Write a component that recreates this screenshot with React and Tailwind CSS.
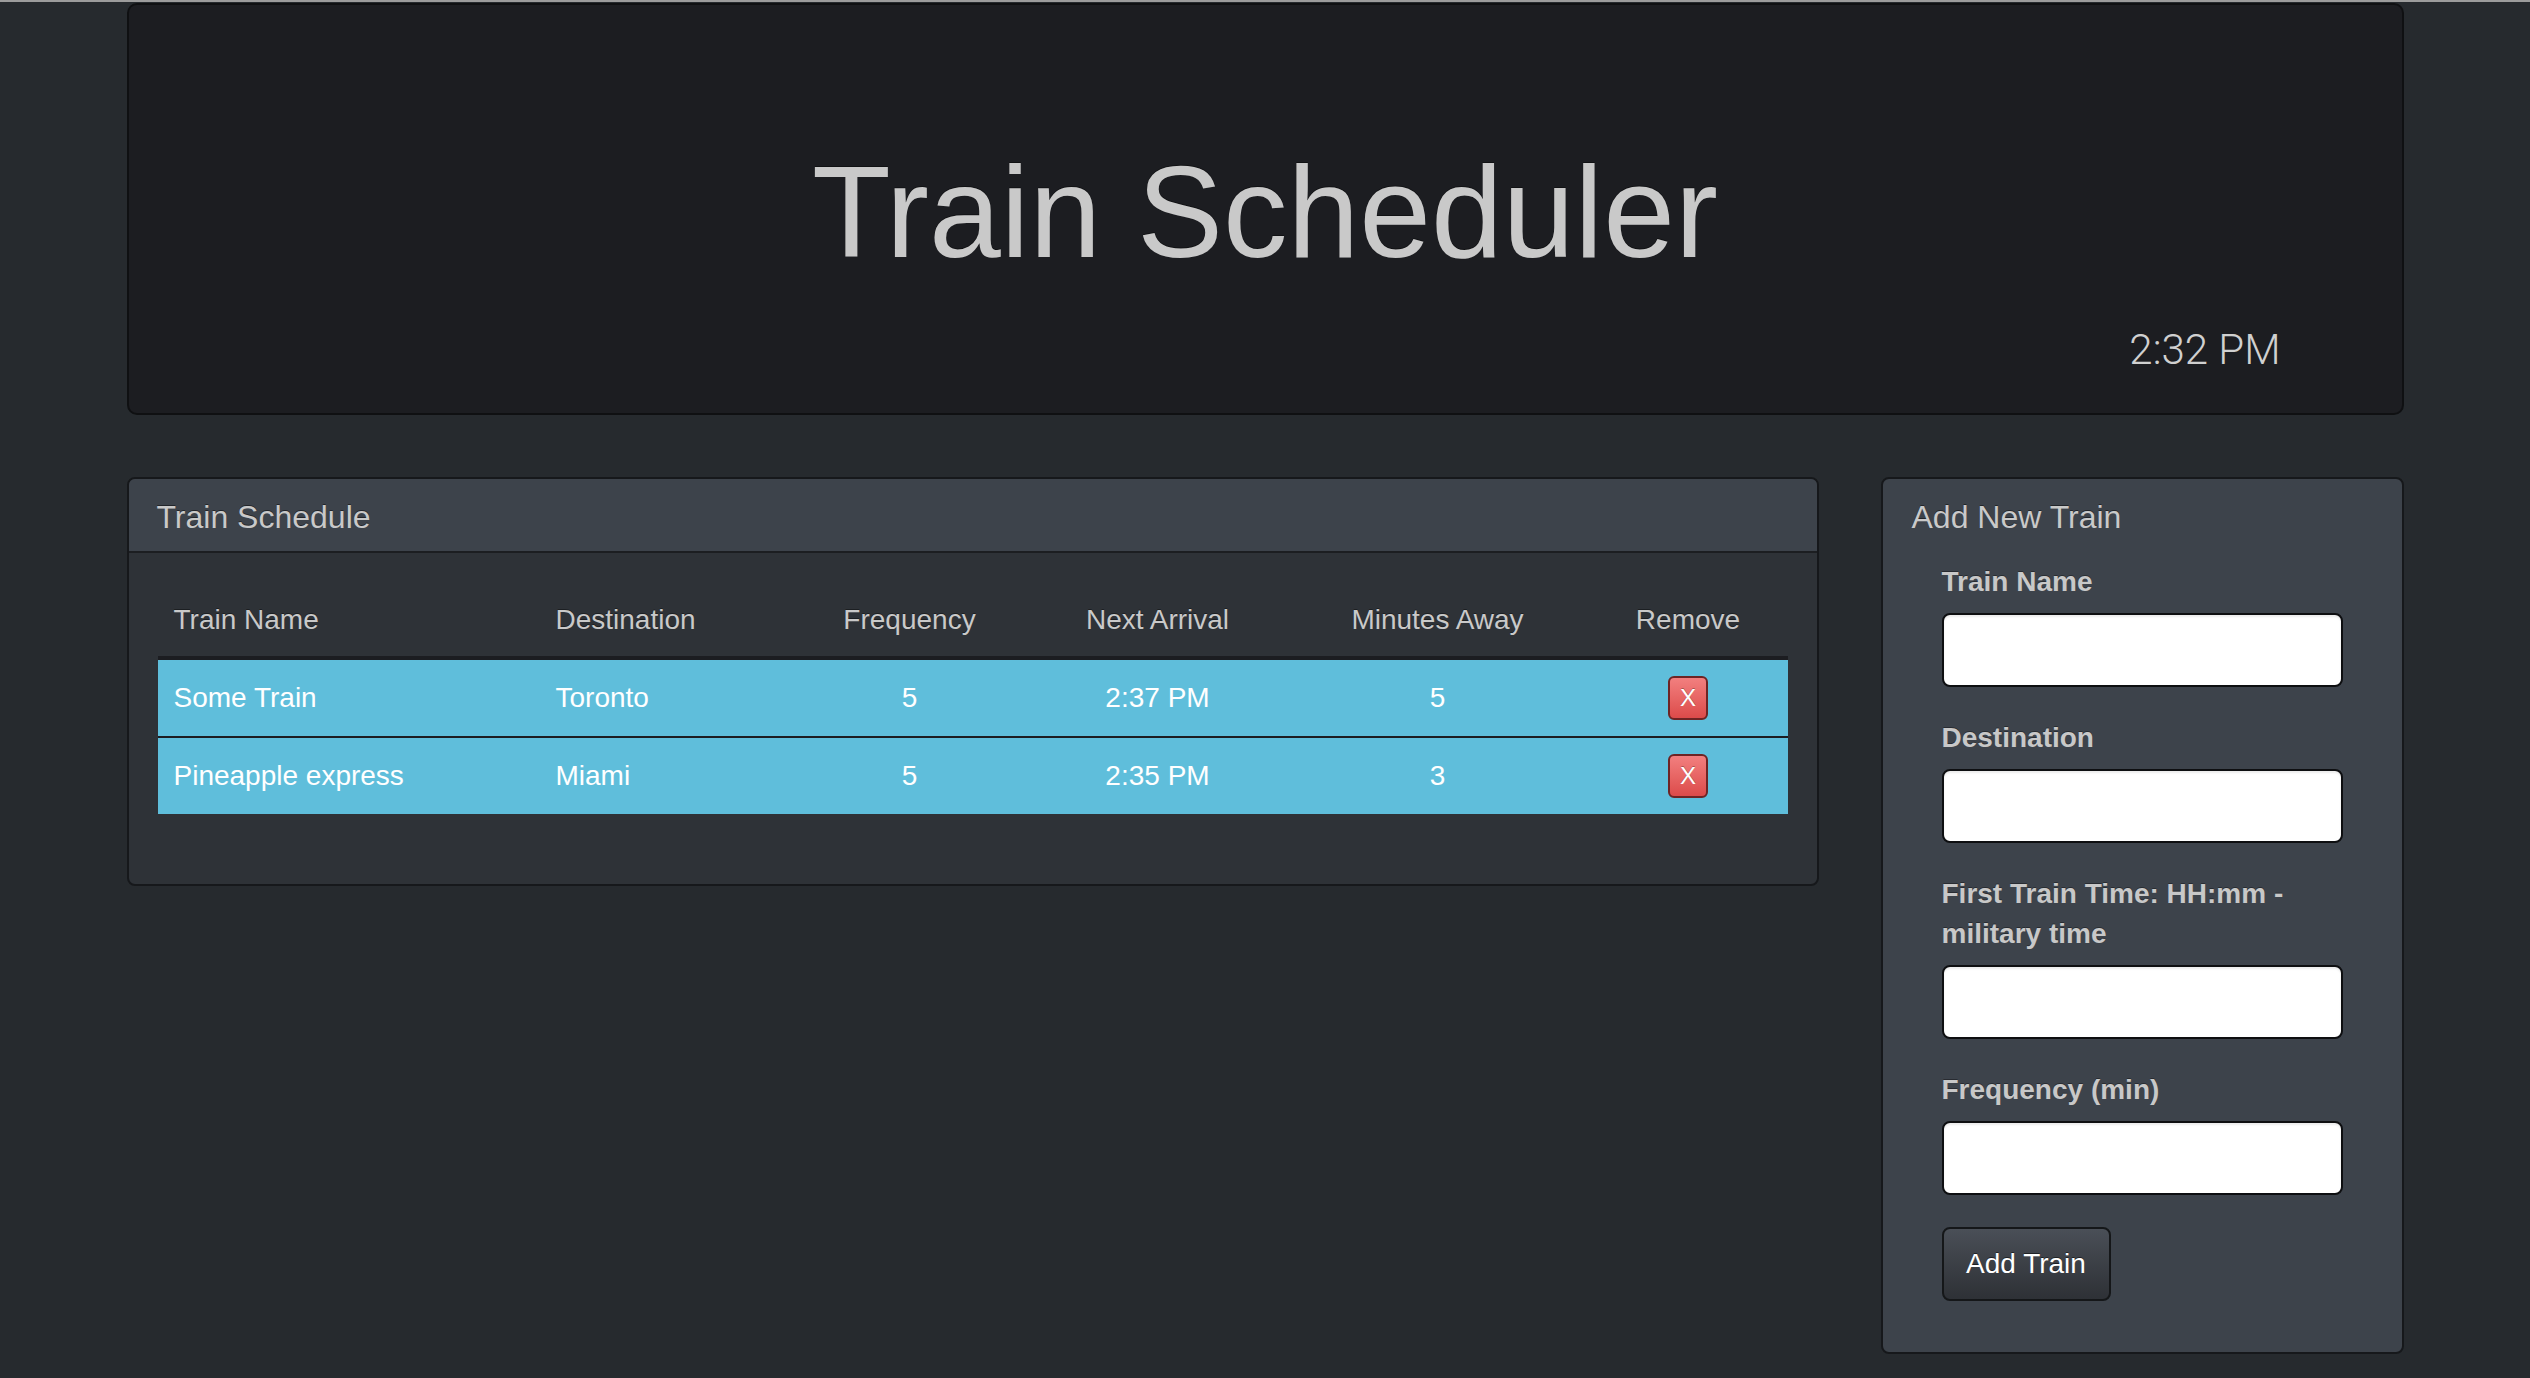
import React from "react";

const rows = [
  { name: "Some Train", dest: "Toronto", freq: "5", next: "2:37 PM", away: "5" },
  { name: "Pineapple express", dest: "Miami", freq: "5", next: "2:35 PM", away: "3" },
];

function Field({ label }) {
  return (
    <div className="mb-[31px]">
      <label className="block text-[28px] leading-[40px] font-bold text-[#c8c8c8] mb-[11px] [text-shadow:0_-1px_0_rgba(0,0,0,0.35)]">
        {label}
      </label>
      <input
        type="text"
        className="block w-full h-[74px] rounded-[8px] border-2 border-[#0e0f11] bg-white shadow-[inset_0_2px_2px_rgba(0,0,0,0.08)] outline-none"
      />
    </div>
  );
}

export default function App() {
  return (
    <div className="min-h-screen bg-[#262a2e] font-['Liberation_Sans',Arial,sans-serif]">
      <div className="h-[2px] bg-[#9c9c9c]" />
      <div className="mx-auto w-[2277px] pt-[1px]">
        {/* Jumbotron */}
        <div className="h-[412px] rounded-[10px] border-2 border-[#0f1012] bg-[#1c1d21] pt-[137px]">
          <h1 className="text-center text-[129px] leading-[140px] font-normal text-[#c9c9c9] [text-shadow:0_-1px_0_rgba(0,0,0,0.4)]">
            Train Scheduler
          </h1>
          <div className="mt-[38px] pr-[121px] text-right text-[42px] leading-[60px] font-light text-[#d0d0d0] font-['Roboto','Liberation_Sans',sans-serif]">
            2:32 PM
          </div>
        </div>

        {/* Panels */}
        <div className="mt-[62px] flex items-start gap-[62px]">
          {/* Train Schedule */}
          <div className="w-[1692px] overflow-hidden rounded-[8px] border-2 border-[#16181b] bg-[#2e3237]">
            <div className="border-b-2 border-[#1c1e21] bg-[#3d434b] px-[28px] pt-[20px] pb-[16px]">
              <h3 className="text-[32px] leading-[36px] text-[#c9c9c9] [text-shadow:0_-1px_0_rgba(0,0,0,0.45)]">
                Train Schedule
              </h3>
            </div>
            <div className="px-[29px] pt-[31px] pb-[30px]">
              <table className="mb-[40px] w-full table-fixed border-collapse text-[28px] leading-[40px]">
                <thead>
                  <tr className="border-b-4 border-[#1c1d21] text-[#c9c9c9] [text-shadow:0_-1px_0_rgba(0,0,0,0.4)]">
                    <th className="w-[382px] px-[16px] py-[16px] text-left font-normal">Train Name</th>
                    <th className="w-[251px] px-[16px] py-[16px] text-left font-normal">Destination</th>
                    <th className="w-[238px] px-[16px] py-[16px] text-center font-normal">Frequency</th>
                    <th className="w-[258px] px-[16px] py-[16px] text-center font-normal">Next Arrival</th>
                    <th className="w-[302px] px-[16px] py-[16px] text-center font-normal">Minutes Away</th>
                    <th className="px-[16px] py-[16px] text-center font-normal">Remove</th>
                  </tr>
                </thead>
                <tbody>
                  {rows.map((r, i) => (
                    <tr
                      key={r.name}
                      className={
                        i === 0
                          ? "bg-[#5fbedb] text-white"
                          : "border-t-2 border-[#1c1d21] bg-[#5fbedb] text-white"
                      }
                    >
                      <td className="px-[16px] py-[16px] align-middle">{r.name}</td>
                      <td className="px-[16px] py-[16px] align-middle">{r.dest}</td>
                      <td className="px-[16px] py-[16px] text-center align-middle">{r.freq}</td>
                      <td className="px-[16px] py-[16px] text-center align-middle">{r.next}</td>
                      <td className="px-[16px] py-[16px] text-center align-middle">{r.away}</td>
                      <td className="px-[16px] py-[16px] text-center align-middle">
                        <button className="inline-flex h-[44px] w-[40px] items-center justify-center rounded-[6px] border-2 border-[#6e2424] bg-gradient-to-b from-[#f27f7f] to-[#dc4a4a] text-[24px] leading-none text-white [text-shadow:0_-1px_0_rgba(0,0,0,0.3)] align-middle">
                          X
                        </button>
                      </td>
                    </tr>
                  ))}
                </tbody>
              </table>
            </div>
          </div>

          {/* Add New Train */}
          <div className="w-[523px] rounded-[8px] border-2 border-[#16181b] bg-[#3d434b] pb-[51px]">
            <div className="px-[29px] pt-[20px]">
              <h3 className="text-[32px] leading-[36px] text-[#c9c9c9] [text-shadow:0_-1px_0_rgba(0,0,0,0.45)]">
                Add New Train
              </h3>
            </div>
            <form className="mt-[27px] px-[59px]" onSubmit={(e) => e.preventDefault()}>
              <Field label="Train Name" />
              <Field label="Destination" />
              <Field label="First Train Time: HH:mm - military time" />
              <Field label="Frequency (min)" />
              <button
                type="submit"
                className="mt-[1px] h-[74px] w-[169px] rounded-[8px] border-2 border-[#151719] bg-gradient-to-b from-[#4a4f57] to-[#2e3136] text-[28px] leading-[40px] text-white [text-shadow:0_-1px_0_rgba(0,0,0,0.5)]"
              >
                Add Train
              </button>
            </form>
          </div>
        </div>
      </div>
    </div>
  );
}
